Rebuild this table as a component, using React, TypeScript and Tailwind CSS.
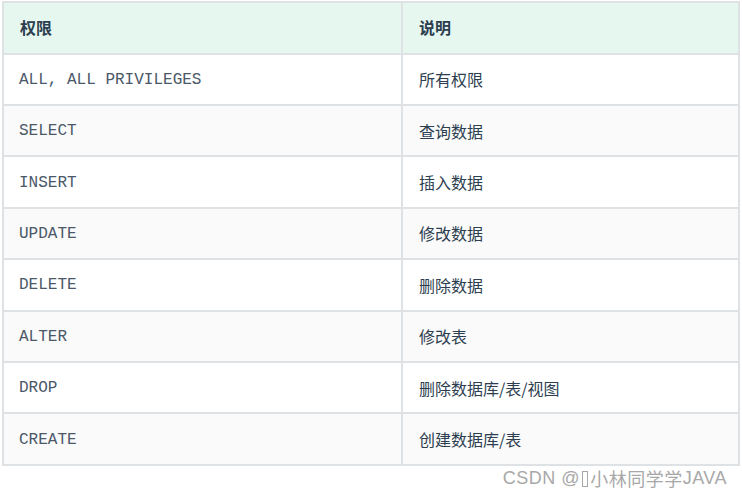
const rows: [string, string][] = [
  ["ALL, ALL PRIVILEGES", "所有权限"],
  ["SELECT", "查询数据"],
  ["INSERT", "插入数据"],
  ["UPDATE", "修改数据"],
  ["DELETE", "删除数据"],
  ["ALTER", "修改表"],
  ["DROP", "删除数据库/表/视图"],
  ["CREATE", "创建数据库/表"],
];

const cjk = "font-['Noto_Sans_CJK_SC','Noto_Sans',sans-serif]";

export default function App() {
  return (
    <div className="w-[742px] h-[496px] bg-white relative text-[#2c3e50]">
      <div className="pt-[1px] pl-[2px]">
        <div className="w-[738px] border-2 border-[#dfe2e5] grid grid-cols-[399px_1fr]">
          <div className={`h-[49.6px] pb-[2px] bg-[#e6f7ef] flex items-center pl-4 text-[16px] font-bold ${cjk} border-r-2 border-[#dfe2e5]`}>
            权限
          </div>
          <div className={`h-[49.6px] pb-[2px] bg-[#e6f7ef] flex items-center pl-4 text-[16px] font-bold ${cjk}`}>
            说明
          </div>
          {rows.map(([code, desc], i) => {
            const bg = i % 2 === 1 ? "bg-[#fafafa]" : "bg-white";
            return (
              <>
                <div
                  key={code + "a"}
                  className={`h-[51.4px] pt-[1px] border-t-2 border-r-2 border-[#dfe2e5] ${bg} flex items-center pl-[15px] font-['Liberation_Mono',monospace] text-[16px] text-[#4a5868]`}
                >
                  {code}
                </div>
                <div
                  key={code + "b"}
                  className={`h-[51.4px] border-t-2 border-[#dfe2e5] ${bg} flex items-center pl-4 text-[16px] ${cjk}`}
                >
                  {desc}
                </div>
              </>
            );
          })}
        </div>
      </div>
      <div className={`absolute right-[15px] top-[465px] text-[18px] tracking-[0.5px] text-[#a8a8a8] ${cjk} flex items-center`}>
        <span className="font-['Liberation_Sans',sans-serif]">CSDN @</span>
        <span className="inline-block w-[6px] h-[16px] border border-[#a8a8a8] mx-[2px]" />
        <span>小林同学学</span>
        <span className="font-['Liberation_Sans',sans-serif]">JAVA</span>
      </div>
    </div>
  );
}
